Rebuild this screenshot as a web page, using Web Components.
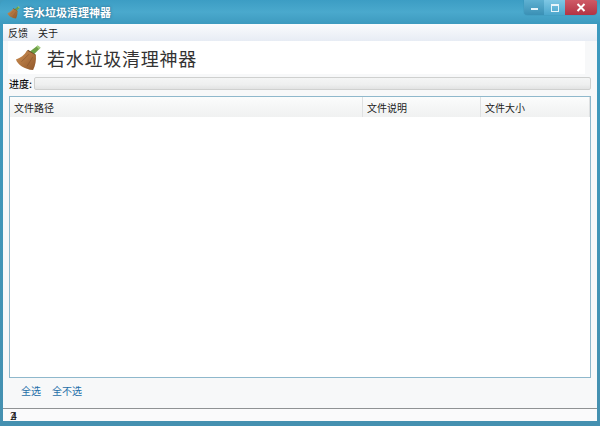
<!DOCTYPE html>
<html lang="zh">
<head>
<meta charset="UTF-8">
<title>若水垃圾清理神器</title>
<style>
  html, body { margin: 0; padding: 0; background: #3f9cc0; }
  body { font: 10px "Noto Sans CJK SC", "Liberation Sans", sans-serif; color: #222; }
</style>
</head>
<body>
<template id="broom">
  <svg viewBox="0 0 28 28" width="100%" height="100%" style="display:block">
    <defs>
      <linearGradient id="bristle" x1="0" y1="0" x2="1" y2="1">
        <stop offset="0" stop-color="#cf9155"/>
        <stop offset="1" stop-color="#8f5629"/>
      </linearGradient>
    </defs>
    <path d="M16 7 L24.500 .5 L27.500 3 L20.500 10 Z" fill="#6d9f45"/>
    <path d="M23 1.700 L24.500 .5 L27.500 3 L26 4.500 Z" fill="#a5cf80"/>
    <path d="M14 5 L22.500 10.500 L21.500 13 L12.500 7 Z" fill="#6b4522"/>
    <path d="M13 6 C10 11 6 14 1 15.500 C3 21 10 26 19.500 27 C22 22 23 16 22.500 11 Z" fill="url(#bristle)"/>
    <path d="M7 18 L15 10 M13 23 L19 13" stroke="#84502a" stroke-width=".6" fill="none"/>
  </svg>
</template>

<script>
  const broomMarkup = () => document.getElementById('broom').innerHTML;

  class AppWindow extends HTMLElement {
    constructor() {
      super();
      this.attachShadow({ mode: 'open' });
      this.shadowRoot.innerHTML = `
        <style>
          :host { display: flex; flex-direction: column; box-sizing: border-box; width: 600px; height: 426px;
            padding: 0 3px 5px; border-radius: 6px 6px 0 0; overflow: hidden;
            background: linear-gradient(#3c9dc4, #4aa9cd 12px, #3d9abf 24px, #4590b0 100%); }
          .client { flex: 1; min-height: 0; display: flex; flex-direction: column; background: #f7f8f9; }
        </style>
        <slot name="title"></slot>
        <div class="client"><slot></slot></div>
      `;
    }
  }
  customElements.define('app-window', AppWindow);

  class TitleBar extends HTMLElement {
    constructor() {
      super();
      this.attachShadow({ mode: 'open' });
      this.shadowRoot.innerHTML = `
        <style>
          :host { display: flex; align-items: flex-start; height: 24px; flex: none; }
          .icon { width: 13px; height: 13px; margin: 6px 3px 0 4px; flex: none; }
          .text { margin-top: 4px; font-size: 11px; line-height: 16px; font-weight: 700; color: #fff;
            text-shadow: 0 0 3px rgba(20,70,100,.7); flex: 1; }
          .btns { display: flex; height: 15px; border-radius: 0 0 4px 4px; overflow: hidden; box-shadow: 0 0 1px #26708f; }
          .btn { display: flex; align-items: center; justify-content: center; height: 15px; }
          .min { width: 20px; background: linear-gradient(#5fb1d2, #3a90b5); }
          .min i { display: block; width: 7px; height: 2px; margin-top: 2px; background: #e6f4fa; }
          .max { width: 21px; background: linear-gradient(#7ec7e4, #4ba6cc); }
          .max i { display: block; box-sizing: border-box; width: 8px; height: 8px; border: 1px solid #e6f4fa; border-top-width: 2px; }
          .close { width: 32px; background: linear-gradient(#cf5a66, #b23444); }
        </style>
        <div class="icon">${broomMarkup()}</div>
        <div class="text"><slot></slot></div>
        <div class="btns">
          <div class="btn min"><i></i></div>
          <div class="btn max"><i></i></div>
          <div class="btn close">
            <svg width="10" height="9" viewBox="0 0 10 9"><path d="M1.500 1 L8.500 8 M8.500 1 L1.500 8" stroke="#fff" stroke-width="2" fill="none"/></svg>
          </div>
        </div>
      `;
    }
  }
  customElements.define('title-bar', TitleBar);

  class MenuBar extends HTMLElement {
    constructor() {
      super();
      this.attachShadow({ mode: 'open' });
      this.shadowRoot.innerHTML = `
        <style>
          :host { display: flex; gap: 10px; flex: none; height: 17px; padding-left: 5px; align-items: center;
            font-size: 10px; color: #222; background: linear-gradient(#fafbfd, #e7ecf4); }
        </style>
        <slot></slot>
      `;
    }
  }
  customElements.define('menu-bar', MenuBar);

  class AppBanner extends HTMLElement {
    constructor() {
      super();
      this.attachShadow({ mode: 'open' });
      this.shadowRoot.innerHTML = `
        <style>
          :host { display: flex; align-items: center; flex: none; height: 33px; margin: 0 12px 0 5px; background: #fff; }
          .icon { width: 26px; height: 26px; margin: 0 6px 0 7px; flex: none; }
          .text { font-size: 18px; line-height: 24px; color: #333; letter-spacing: .75px; }
        </style>
        <div class="icon">${broomMarkup()}</div>
        <div class="text"><slot></slot></div>
      `;
    }
  }
  customElements.define('app-banner', AppBanner);

  class ProgressRow extends HTMLElement {
    constructor() {
      super();
      this.attachShadow({ mode: 'open' });
      this.shadowRoot.innerHTML = `
        <style>
          :host { display: flex; align-items: center; flex: none; height: 13px; margin: 3px 6px 0 6px; font-size: 10px; font-weight: 500; color: #111; }
          span { width: 25px; flex: none; }
          .bar { flex: 1; height: 13px; box-sizing: border-box; border: 1px solid #cfd0cf; border-radius: 2px;
            background: linear-gradient(#f4f5f5, #eeefef 60%, #e2e3e3); }
        </style>
        <span><slot></slot></span>
        <div class="bar"></div>
      `;
    }
  }
  customElements.define('progress-row', ProgressRow);

  class FileTable extends HTMLElement {
    constructor() {
      super();
      this.attachShadow({ mode: 'open' });
      this.shadowRoot.innerHTML = `
        <style>
          :host { display: flex; flex-direction: column; flex: 1; min-height: 0; margin: 6px 6px 0 6px;
            border: 1px solid #8fb8cc; background: #fff; }
          .head { display: grid; grid-template-columns: 353px 118px 1fr; height: 20px; flex: none;
            background: linear-gradient(#fbfcfc, #f0f1f1); font-size: 10px; color: #222; }
          ::slotted(span) { display: flex; align-items: center; padding-left: 4px; border-right: 1px solid #dfe1e2; }
        </style>
        <div class="head"><slot></slot></div>
      `;
    }
  }
  customElements.define('file-table', FileTable);

  class LinkRow extends HTMLElement {
    constructor() {
      super();
      this.attachShadow({ mode: 'open' });
      this.shadowRoot.innerHTML = `
        <style>
          :host { display: flex; gap: 11px; align-items: center; flex: none; box-sizing: border-box; height: 30px; padding: 0 0 6px 18px;
            font-size: 10px; color: #1f6fa8; }
        </style>
        <slot></slot>
      `;
    }
  }
  customElements.define('link-row', LinkRow);

  class StatusBar extends HTMLElement {
    constructor() {
      super();
      this.attachShadow({ mode: 'open' });
      this.shadowRoot.innerHTML = `
        <style>
          :host { display: flex; align-items: center; flex: none; box-sizing: border-box; height: 13px; padding-left: 7px;
            border-top: 1px solid #8f9294; background: #fafafb; font-size: 11px; line-height: 12px; color: #111; letter-spacing: -5px; }
          span { margin-left: 1px; }
        </style>
        <slot></slot>
      `;
    }
  }
  customElements.define('status-bar', StatusBar);
</script>

<app-window>
  <title-bar slot="title">若水垃圾清理神器</title-bar>
  <menu-bar><span>反馈</span><span>关于</span></menu-bar>
  <app-banner>若水垃圾清理神器</app-banner>
  <progress-row>进度:</progress-row>
  <file-table><span>文件路径</span><span>文件说明</span><span>文件大小</span></file-table>
  <link-row><span>全选</span><span>全不选</span></link-row>
  <status-bar>24</status-bar>
</app-window>
</body>
</html>
